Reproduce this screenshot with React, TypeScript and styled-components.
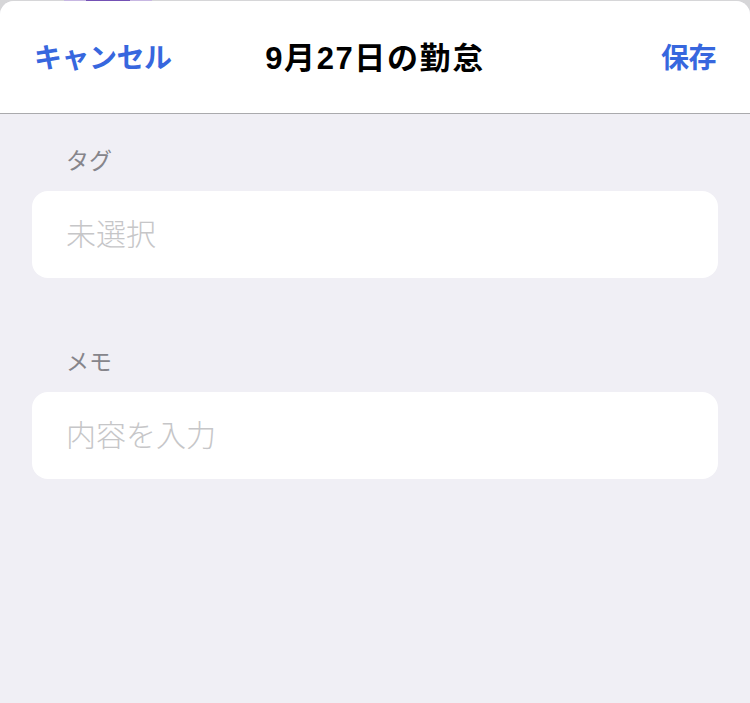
import React from "react";
import styled, { createGlobalStyle } from "styled-components";

const GlobalStyle = createGlobalStyle`
  html, body {
    margin: 0;
    padding: 0;
    background: #d6d6d8;
    font-family: "Noto Sans CJK JP", "Noto Sans", sans-serif;
  }
`;

const blue = "#3767de";

const Screen = styled.div`
  width: 750px;
  height: 703px;
  overflow: hidden;
  display: flex;
  flex-direction: column;
  background: #d6d6d8;
`;

const Backdrop = styled.div`
  height: 1px;
  display: flex;
  flex-shrink: 0;
`;

const BackdropTab = styled.div`
  margin-left: 64px;
  width: 88px;
  height: 1px;
  background: #c7b7e2;
  display: flex;
  justify-content: center;
`;

const BackdropTabActive = styled.div`
  width: 44px;
  height: 1px;
  background: #7451b5;
`;

const Sheet = styled.div`
  flex: 1;
  display: flex;
  flex-direction: column;
  background: #f0eff5;
  border-radius: 14px 14px 0 0;
  overflow: hidden;
`;

const NavBar = styled.header`
  height: 112px;
  flex-shrink: 0;
  display: grid;
  grid-template-columns: 1fr auto 1fr;
  align-items: center;
  padding: 0 34px 0 34px;
  background: #ffffff;
  border-bottom: 1px solid #aaaaad;
`;

const NavButton = styled.button<{ $align: "left" | "right" }>`
  justify-self: ${(p) => (p.$align === "left" ? "start" : "end")};
  border: none;
  background: none;
  padding: 0;
  margin-top: -2px;
  font-family: inherit;
  font-size: 28px;
  font-weight: 700;
  color: ${blue};
  letter-spacing: -0.5px;
  cursor: pointer;
`;

const Title = styled.h1`
  margin: -3px 0 0;
  font-family: "Liberation Sans", "Noto Sans CJK JP", sans-serif;
  font-size: 31px;
  font-weight: 700;
  color: #000;
  letter-spacing: 1.6px;
`;

const Content = styled.main`
  display: flex;
  flex-direction: column;
  padding: 30px 32px 0;
  gap: 67px;
`;

const Section = styled.section`
  display: flex;
  flex-direction: column;
  gap: 17px;
`;

const SectionLabel = styled.div`
  padding-left: 34px;
  font-size: 23px;
  line-height: 30px;
  color: #86858b;
`;

const Field = styled.div`
  height: 87px;
  box-sizing: border-box;
  display: flex;
  align-items: center;
  padding: 0 34px 6px;
  background: #ffffff;
  border-radius: 16px;
  font-size: 30px;
  font-weight: 300;
  color: #c6c6c8;
`;

export default function App() {
  return (
    <Screen>
      <GlobalStyle />
      <Backdrop>
        <BackdropTab>
          <BackdropTabActive />
        </BackdropTab>
      </Backdrop>
      <Sheet>
        <NavBar>
          <NavButton $align="left">キャンセル</NavButton>
          <Title>9月27日の勤怠</Title>
          <NavButton $align="right">保存</NavButton>
        </NavBar>
        <Content>
          <Section>
            <SectionLabel>タグ</SectionLabel>
            <Field>未選択</Field>
          </Section>
          <Section>
            <SectionLabel>メモ</SectionLabel>
            <Field>内容を入力</Field>
          </Section>
        </Content>
      </Sheet>
    </Screen>
  );
}
